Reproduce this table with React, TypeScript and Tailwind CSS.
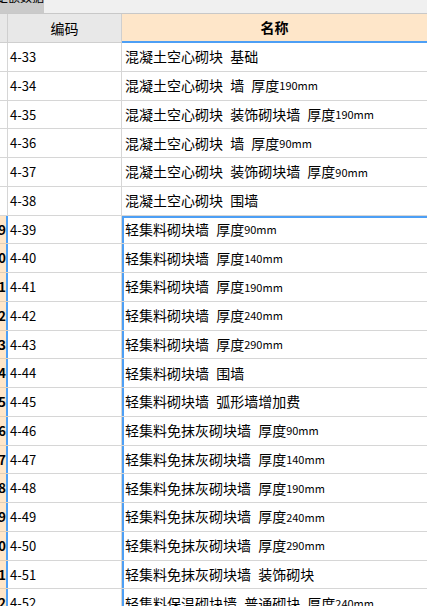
import React from 'react';

const rows: [string, string][] = [
  ['4-33', '混凝土空心砌块 基础'],
  ['4-34', '混凝土空心砌块 墙 厚度190mm'],
  ['4-35', '混凝土空心砌块 装饰砌块墙 厚度190mm'],
  ['4-36', '混凝土空心砌块 墙 厚度90mm'],
  ['4-37', '混凝土空心砌块 装饰砌块墙 厚度90mm'],
  ['4-38', '混凝土空心砌块 围墙'],
  ['4-39', '轻集料砌块墙 厚度90mm'],
  ['4-40', '轻集料砌块墙 厚度140mm'],
  ['4-41', '轻集料砌块墙 厚度190mm'],
  ['4-42', '轻集料砌块墙 厚度240mm'],
  ['4-43', '轻集料砌块墙 厚度290mm'],
  ['4-44', '轻集料砌块墙 围墙'],
  ['4-45', '轻集料砌块墙 弧形墙增加费'],
  ['4-46', '轻集料免抹灰砌块墙 厚度90mm'],
  ['4-47', '轻集料免抹灰砌块墙 厚度140mm'],
  ['4-48', '轻集料免抹灰砌块墙 厚度190mm'],
  ['4-49', '轻集料免抹灰砌块墙 厚度240mm'],
  ['4-50', '轻集料免抹灰砌块墙 厚度290mm'],
  ['4-51', '轻集料免抹灰砌块墙 装饰砌块'],
  ['4-52', '轻集料保温砌块墙 普通砌块 厚度240mm'],
];

const font = { fontFamily: '"Noto Sans CJK SC", "Noto Sans", sans-serif' };

// the size part ("190mm") is drawn in a smaller face, as in the grid
function Name({ text }: { text: string }) {
  const parts = text.split(/(\d+mm)/);
  return (
    <>
      {parts.map((p, i) =>
        /^\d+mm$/.test(p) ? (
          <span key={i} className="text-[11px]">
            {p}
          </span>
        ) : (
          <span key={i}>{p}</span>
        )
      )}
    </>
  );
}

export default function App() {
  return (
    <div className="w-[427px] h-[606px] overflow-hidden bg-white text-black" style={font}>
      {/* tab strip */}
      <div className="flex h-[14px] bg-[#f0f0f0] border-b border-[#c8c8c8] overflow-hidden">
        <div className="w-[44px] bg-[#cacaca] overflow-hidden">
          <div className="-mt-[9px] -ml-[4px] text-[12px] leading-[12px] whitespace-nowrap">定额数据</div>
        </div>
      </div>

      {/* header */}
      <div className="flex h-[29px]">
        <div className="w-[8px] shrink-0 bg-[#e8e8e8] border-r border-b border-[#cfcfcf]" />
        <div className="w-[114px] shrink-0 bg-[#e8e8e8] border-r border-b border-[#cfcfcf] flex items-center justify-center text-[14px]">
          编码
        </div>
        <div className="flex-1 bg-[#fee6c9] border-b-2 border-[#4d9ff5] flex items-center justify-center text-[14px] font-bold">
          名称
        </div>
      </div>

      {rows.map(([code, name], i) => {
        const sel = i >= 6;
        const first = i === 6;
        return (
          <div key={code} className="flex h-[28.75px]">
            <div
              className={
                sel
                  ? 'w-[8px] shrink-0 bg-[#fee6c9] border-b border-[#e2cfb6] shadow-[inset_-2px_0_0_#4d9ff5] overflow-hidden flex items-center justify-end pr-[2px]'
                  : 'w-[8px] shrink-0 border-r border-b border-[#d6d6d6]'
              }
            >
              {sel && <span className="text-[13px] font-bold whitespace-nowrap">{code.slice(2)}</span>}
            </div>
            <div className="w-[114px] shrink-0 border-r border-b border-[#d6d6d6] flex items-center pl-[2px] text-[13px]">
              {code}
            </div>
            <div
              className={
                'flex-1 border-b border-[#d6d6d6] flex items-center pl-[3px] text-[14px] whitespace-pre [word-spacing:4px] ' +
                (first
                  ? 'shadow-[inset_2px_2px_0_#4d9ff5]'
                  : sel
                  ? 'shadow-[inset_2px_0_0_#4d9ff5]'
                  : '')
              }
            >
              <Name text={name} />
            </div>
          </div>
        );
      })}
    </div>
  );
}
